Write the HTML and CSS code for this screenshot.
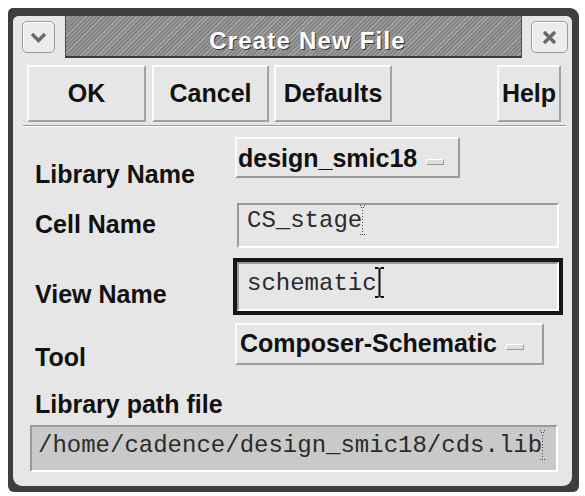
FILE: index.html
```html
<!DOCTYPE html>
<html>
<head>
<meta charset="utf-8">
<title>Create New File</title>
<link rel="stylesheet" href="styles.css">
</head>
<body>
<div class="window">
  <div class="inner">
    <div class="titlebar">
      <div class="tb-side tb-left">
        <span class="tb-btn">
          <svg width="17" height="11" viewBox="0 0 17 11"><polyline points="2,2 8.5,8.5 15,2" fill="none" stroke="#6a6a6a" stroke-width="3.4"/></svg>
        </span>
      </div>
      <div class="tb-title">Create New File</div>
      <div class="tb-side tb-right">
        <span class="tb-btn tb-close">
          <svg width="15" height="15" viewBox="0 0 15 15"><path d="M2 2 L13 13 M13 2 L2 13" stroke="#6a6a6a" stroke-width="3.4" fill="none"/></svg>
        </span>
      </div>
    </div>
    <div class="content">
      <div class="btn-row">
        <button class="btn btn-ok">OK</button>
        <button class="btn btn-cancel">Cancel</button>
        <button class="btn btn-defaults">Defaults</button>
        <button class="btn btn-help">Help</button>
      </div>
      <div class="sep"></div>

      <div class="field f-lib">
        <div class="label">Library Name</div>
        <div class="menu menu-lib"><span>design_smic18</span><i class="ind"></i></div>
      </div>
      <div class="field f-cell">
        <div class="label">Cell Name</div>
        <div class="entry entry-cell">CS_stage<svg class="dots" width="7" height="31" viewBox="0 0 7 31"><g fill="#4a4a4a"><rect x="1" y="0" width="1" height="1"/><rect x="5" y="0" width="1" height="1"/><rect x="2" y="2" width="1" height="1"/><rect x="4" y="2" width="1" height="1"/><rect x="3" y="5" width="1" height="1"/><rect x="3" y="8" width="1" height="1"/><rect x="3" y="11" width="1" height="1"/><rect x="3" y="14" width="1" height="1"/><rect x="3" y="17" width="1" height="1"/><rect x="3" y="20" width="1" height="1"/><rect x="3" y="23" width="1" height="1"/><rect x="3" y="26" width="1" height="1"/><rect x="1" y="29" width="1" height="1"/><rect x="3" y="29" width="1" height="1"/><rect x="5" y="29" width="1" height="1"/></g></svg></div>
      </div>
      <div class="field f-view">
        <div class="label">View Name</div>
        <div class="entry entry-view">schematic<svg class="ibeam" width="9" height="31" viewBox="0 0 9 31"><g fill="#111"><rect x="3.5" y="1" width="2" height="29"/><rect x="0" y="0" width="3.5" height="2"/><rect x="5.5" y="0" width="3.5" height="2"/><rect x="0" y="29" width="3.5" height="2"/><rect x="5.5" y="29" width="3.5" height="2"/></g></svg></div>
      </div>
      <div class="field f-tool">
        <div class="label">Tool</div>
        <div class="menu menu-tool"><span>Composer-Schematic</span><i class="ind"></i></div>
      </div>
      <div class="label path-label">Library path file</div>
      <div class="entry entry-path">/home/cadence/design_smic18/cds.lib<svg class="dots" width="7" height="31" viewBox="0 0 7 31"><g fill="#4a4a4a"><rect x="1" y="0" width="1" height="1"/><rect x="5" y="0" width="1" height="1"/><rect x="2" y="2" width="1" height="1"/><rect x="4" y="2" width="1" height="1"/><rect x="3" y="5" width="1" height="1"/><rect x="3" y="8" width="1" height="1"/><rect x="3" y="11" width="1" height="1"/><rect x="3" y="14" width="1" height="1"/><rect x="3" y="17" width="1" height="1"/><rect x="3" y="20" width="1" height="1"/><rect x="3" y="23" width="1" height="1"/><rect x="3" y="26" width="1" height="1"/><rect x="1" y="29" width="1" height="1"/><rect x="3" y="29" width="1" height="1"/><rect x="5" y="29" width="1" height="1"/></g></svg></div>
    </div>
  </div>
</div>
</body>
</html>
```
FILE: styles.css
```css
* { box-sizing: border-box; }
html, body { margin: 0; padding: 0; background: #fff; }
body {
  width: 585px;
  height: 496px;
  overflow: hidden;
  font-family: "Liberation Sans", Arial, sans-serif;
}
.window {
  margin: 8px 0 0 8px;
  width: 571px;
  height: 484px;
  background: #3e3e3e;
  padding: 8px 7px 6px 5px;
  border-radius: 5px 9px 6px 6px;
}
.inner {
  height: 100%;
  background: #e6e6e6;
  border-radius: 6px 6px 9px 9px;
  display: flex;
  flex-direction: column;
  overflow: hidden;
}
.titlebar { display: flex; height: 42px; flex: none; }
.tb-side { flex: none; background: #e6e6e6; }
.tb-left { width: 52px; padding: 5px 0 0 9px; }
.tb-right { width: 50px; padding: 5px 0 0 9px; }
.tb-btn {
  display: flex;
  width: 33px;
  height: 32px;
  border: 1px solid #9a9a9a;
  border-radius: 5px;
  background: #ececec;
  box-shadow: inset 1px 1px #fff;
  align-items: center;
  justify-content: center;
}
.tb-close { width: 37px; }
.tb-title {
  flex: 1;
  background: repeating-linear-gradient(135deg, #858585 0 2px, #a4a4a4 2px 3px);
  border-bottom: 2px solid #3a3a3a;
  border-left: 1px solid #4a4a4a;
  border-right: 1px solid #4a4a4a;
  color: #fff;
  font-weight: bold;
  font-size: 24px;
  line-height: 24px;
  letter-spacing: 1.2px;
  text-align: center;
  padding: 13px 0 0 28px;
  text-shadow: 1px 1px 0 #3a3a3a;
  white-space: nowrap;
}
.content { flex: 1; display: flex; flex-direction: column; }
.btn-row { display: flex; padding: 7px 11px 0 14px; }
.btn {
  height: 57px;
  font: bold 25px/25px "Liberation Sans", Arial, sans-serif;
  color: #111;
  background: #e6e6e6;
  border: 2px solid;
  border-color: #fcfcfc #a2a2a2 #a2a2a2 #fcfcfc;
  padding: 0;
}
.btn-ok { width: 119px; }
.btn-cancel { width: 117px; margin-left: 6px; }
.btn-defaults { width: 118px; margin-left: 5px; }
.btn-help { width: 64px; margin-left: auto; }
.sep {
  margin: 3px 6px 0 10px;
  border-top: 1px solid #9a9a9a;
  border-bottom: 1px solid #fff;
}
.field {
  display: grid;
  grid-template-columns: 202px auto;
  align-items: start;
  justify-content: start;
  padding-left: 22px;
}
.label {
  font-weight: bold;
  font-size: 25px;
  line-height: 25px;
  color: #111;
  white-space: nowrap;
}
.f-lib { margin-top: 10px; }
.f-lib .label { padding-top: 25px; }
.f-cell { margin-top: 16px; }
.f-cell .label { padding-top: 9px; }
.f-view { margin-top: 14px; }
.f-view .label { padding-top: 20px; }
.f-tool { margin-top: 12px; }
.f-tool .label { padding-top: 22px; }
.path-label { margin: 22px 0 0 22px; }

.menu {
  display: flex;
  align-items: flex-start;
  margin-left: -2px;
  border: 2px solid;
  border-color: #fcfcfc #9c9c9c #9c9c9c #fcfcfc;
  padding: 7px 0 0 1px;
  font-weight: bold;
  font-size: 25px;
  line-height: 25px;
  color: #111;
  white-space: nowrap;
}
.menu-lib { width: 225px; height: 41px; }
.menu-tool { width: 309px; height: 42px; padding-top: 6px; padding-left: 3px; }
.ind {
  display: block;
  width: 18px;
  height: 6px;
  margin: 13px 0 0 9px;
  border: 1px solid;
  border-color: #fff #999 #999 #fff;
  background: #dedede;
}

.entry {
  position: relative;
  border: 2px solid;
  border-color: #9a9a9a #fff #fff #9a9a9a;
  background: #e6e6e6;
  font-family: "Liberation Mono", "Courier New", monospace;
  font-size: 24px;
  line-height: 24px;
  color: #2b2b2b;
  padding: 4px 8px;
  white-space: nowrap;
  overflow: hidden;
}
.entry-cell { width: 322px; height: 45px; }
.entry-view {
  width: 322px;
  height: 49px;
  padding-top: 8px;
  box-shadow: 0 0 0 4px #161616;
  overflow: visible;
}
.entry-path {
  margin: 8px 0 0 17px;
  width: 528px;
  height: 47px;
  background: #c9c9c9;
  padding: 7px 6px;
}
.dots {
  display: inline-block;
  vertical-align: top;
  margin: -4px 0 0 -3px;
}
.ibeam {
  position: absolute;
  left: 136px;
  top: 3px;
}
```
